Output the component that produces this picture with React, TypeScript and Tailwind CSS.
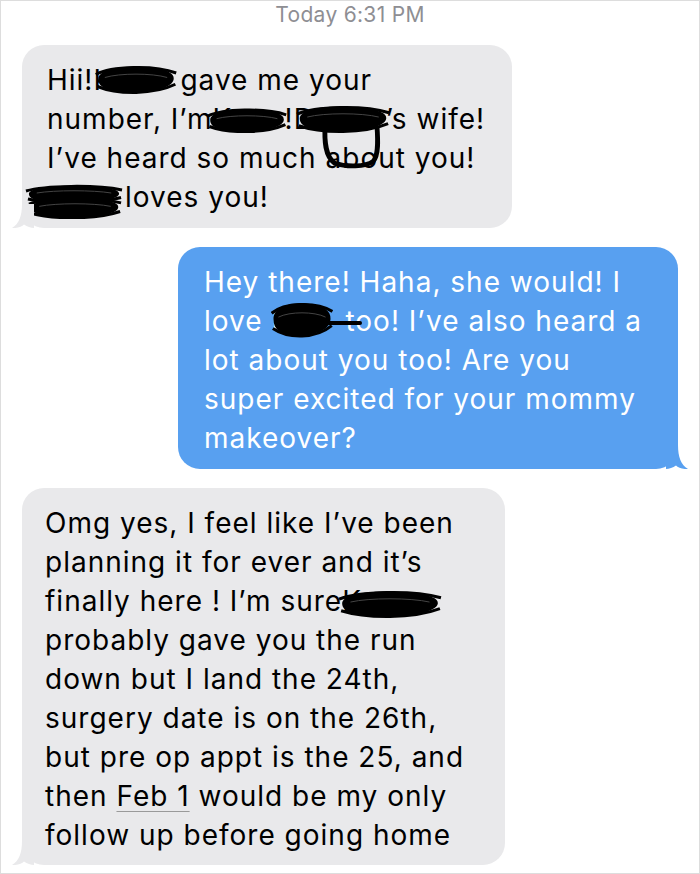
import type { ReactNode } from "react";

const font = "font-['Inter','Liberation_Sans',sans-serif]";

// scribble that blacks out a name
function Blob({ className }: { className: string }) {
  return (
    <svg
      viewBox="0 0 100 40"
      preserveAspectRatio="none"
      className={`absolute pointer-events-none ${className}`}
    >
      <path
        d="M4,20 C4,6 36,2 60,4 C84,6 97,11 96,20 C95,33 66,38 40,37 C16,36 4,32 4,20 Z"
        fill="black"
      />
      <path
        d="M1,14 C20,3 72,1 99,12"
        stroke="black"
        strokeWidth="3"
        fill="none"
        vectorEffect="non-scaling-stroke"
      />
      <path
        d="M3,30 C28,41 72,41 98,27"
        stroke="black"
        strokeWidth="3"
        fill="none"
        vectorEffect="non-scaling-stroke"
      />
      <path
        d="M12,18 C30,12 70,12 88,18"
        stroke="#444444"
        strokeWidth="1"
        fill="none"
        vectorEffect="non-scaling-stroke"
      />
    </svg>
  );
}

function Tail({ side, color }: { side: "left" | "right"; color: string }) {
  return (
    <svg
      viewBox="0 0 22 24"
      className={
        side === "right"
          ? "absolute -right-[10px] bottom-0 w-[22px] h-[24px]"
          : "absolute -left-[10px] bottom-0 w-[22px] h-[24px] -scale-x-100"
      }
    >
      <path
        d="M0,0 H12 C12,12 15,20 22,24 C17,24.5 12,22.5 10,20.5 C7,22.8 3,24 0,24 Z"
        fill={color}
      />
    </svg>
  );
}

// blacked-out word: keeps its room in the line, scribble lies on top
function Redact({
  width,
  children,
  marks,
}: {
  width: string;
  children: ReactNode;
  marks: ReactNode;
}) {
  return (
    <span className={`relative inline-block overflow-visible ${width}`}>
      {children}
      {marks}
    </span>
  );
}

function Line({ children }: { children: ReactNode }) {
  return <div className="whitespace-nowrap">{children}</div>;
}

function Bubble({
  from,
  children,
  className,
}: {
  from: "me" | "them";
  children: ReactNode;
  className: string;
}) {
  const me = from === "me";
  return (
    <div
      className={`relative rounded-[22px] pt-[16px] ${
        me ? "self-end bg-[#58a0f0] text-white" : "self-start bg-[#e9e9eb] text-black"
      } ${className}`}
    >
      {children}
      <Tail side={me ? "right" : "left"} color={me ? "#58a0f0" : "#e9e9eb"} />
    </div>
  );
}

export default function App() {
  return (
    <div
      className={`w-[700px] h-[874px] overflow-hidden bg-white border border-[#dddddd] ${font}`}
    >
      <div className="pt-[2px] text-center text-[21px] leading-[24px] tracking-[0.3px] text-[#8e8e93]">
        Today 6:31 PM
      </div>

      <div className="flex flex-col gap-[19px] px-[21px] pt-[18px] text-[28px] leading-[39px] tracking-[1px]">
        <Bubble from="them" className="w-[490px] pl-[25px] pb-[11px]">
          <Line>
            Hii!
            <Redact
              width="w-[87px]"
              marks={<Blob className="left-[2px] top-[3px] w-[82px] h-[30px]" />}
            >
              K
            </Redact>
            gave me your
          </Line>
          <Line>
            number, I’m
            <Redact
              width="w-[72px]"
              marks={<Blob className="-left-[6px] top-[7px] w-[80px] h-[26px]" />}
            >
              K
            </Redact>
            !
            <Redact
              width="w-[92px]"
              marks={
                <>
                  <Blob className="left-[2px] top-[4px] w-[94px] h-[29px]" />
                  <svg
                    viewBox="0 0 64 50"
                    className="absolute left-[26px] top-[22px] w-[64px] h-[48px]"
                  >
                    <path
                      d="M4,2 C3,20 4,36 14,43 C26,47 46,47 54,41 C60,35 59,18 58,4"
                      stroke="black"
                      strokeWidth="5"
                      fill="none"
                    />
                  </svg>
                </>
              }
            >
              D
            </Redact>
            ’s wife!
          </Line>
          <Line>I’ve heard so much about you!</Line>
          <Line>
            <Redact
              width="w-[78px]"
              marks={
                <>
                  <Blob className="-left-[22px] top-[6px] w-[98px] h-[20px]" />
                  <Blob className="-left-[19px] top-[18px] w-[94px] h-[23px]" />
                </>
              }
            >
              K
            </Redact>
            loves you!
          </Line>
        </Bubble>

        <Bubble from="me" className="w-[500px] pl-[26px] pb-[11px]">
          <Line>Hey there! Haha, she would! I</Line>
          <Line>
            love{" "}
            <Redact
              width="w-[74px]"
              marks={
                <>
                  <Blob className="left-0 -top-[2px] w-[62px] h-[38px]" />
                  <svg
                    viewBox="0 0 40 8"
                    className="absolute left-[52px] top-[17px] w-[40px] h-[8px]"
                  >
                    <path d="M0,4 H37" stroke="black" strokeWidth="4" strokeLinecap="round" />
                  </svg>
                </>
              }
            >
              K
            </Redact>
            too! I’ve also heard a
          </Line>
          <Line>lot about you too! Are you</Line>
          <Line>super excited for your mommy</Line>
          <Line>makeover?</Line>
        </Bubble>

        <Bubble from="them" className="w-[483px] pl-[23px] pb-[10px]">
          <Line>Omg yes, I feel like I’ve been</Line>
          <Line>planning it for ever and it’s</Line>
          <Line>
            finally here ! I’m sure
            <Redact
              width="w-[100px]"
              marks={<Blob className="-left-[4px] top-[7px] w-[104px] h-[29px]" />}
            >
              K
            </Redact>
          </Line>
          <Line>probably gave you the run</Line>
          <Line>down but I land the 24th,</Line>
          <Line>surgery date is on the 26th,</Line>
          <Line>but pre op appt is the 25, and</Line>
          <Line>
            then{" "}
            <span className="underline decoration-[#9a9a9a] decoration-1 underline-offset-[5px]">
              Feb 1
            </span>{" "}
            would be my only
          </Line>
          <Line>follow up before going home</Line>
        </Bubble>
      </div>
    </div>
  );
}
